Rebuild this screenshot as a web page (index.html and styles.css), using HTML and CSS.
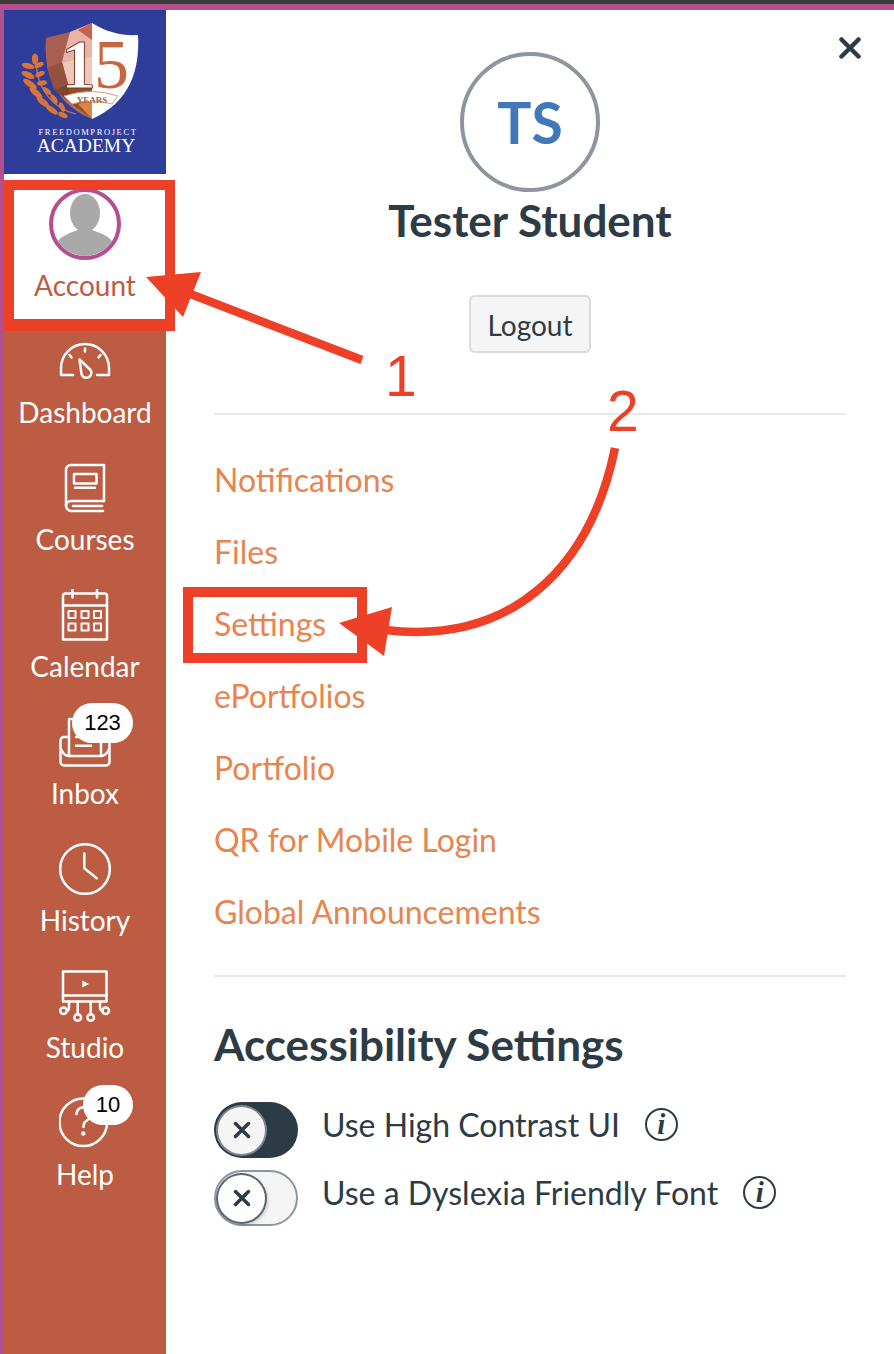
FILE: index.html
```html
<!DOCTYPE html>
<html lang="en">
<head>
<meta charset="utf-8">
<title>Account</title>
<link rel="stylesheet" href="styles.css">
</head>
<body>
<div class="page">
  <div class="topbar"></div>
  <div class="app">
    <nav class="sidebar">
      <svg class="logo" viewBox="4 10 162 164" xmlns="http://www.w3.org/2000/svg">
        <rect x="4" y="10" width="162" height="164" fill="#2e3d9a"/>
        <path d="M92 23 C78 32 62 37 46 38 C44 70 52 102 92 119 Z" fill="#b76a58"/>
        <polygon points="46,38 70,32 62,62 47,68" fill="#a85f52"/>
        <polygon points="70,32 92,23 92,56 62,62" fill="#e8b4a6"/>
        <polygon points="92,23 92,40 78,30" fill="#c9604f"/>
        <polygon points="62,62 92,56 92,88 68,84" fill="#eec6ba"/>
        <polygon points="47,68 62,62 68,84 54,90" fill="#96503f"/>
        <polygon points="54,90 68,84 72,104" fill="#7f4530"/>
        <polygon points="68,84 92,88 92,119 72,104" fill="#8a5026"/>
        <polygon points="78,104 92,100 92,119" fill="#d9873f"/>
        <path d="M92 23 C106 32 122 36 138 35 C140 70 130 102 92 119 Z" fill="#fff"/>
        <g fill="#d8743a">
          <ellipse cx="35" cy="59" rx="3.200" ry="5.500"/>
          <ellipse cx="28" cy="66" rx="6.500" ry="2.800" transform="rotate(15 28 66)"/>
          <ellipse cx="39" cy="65" rx="5" ry="2.500" transform="rotate(-25 39 65)"/>
          <ellipse cx="28" cy="75" rx="7" ry="3" transform="rotate(25 28 75)"/>
          <ellipse cx="40" cy="74" rx="5" ry="2.500" transform="rotate(-25 40 74)"/>
          <ellipse cx="30" cy="84" rx="8" ry="3" transform="rotate(35 30 84)"/>
          <ellipse cx="42" cy="83" rx="5" ry="2.500" transform="rotate(-10 42 83)"/>
          <ellipse cx="36" cy="93" rx="8" ry="3" transform="rotate(40 36 93)"/>
          <ellipse cx="47" cy="91" rx="5.500" ry="2.500" transform="rotate(40 47 91)"/>
          <ellipse cx="43" cy="102" rx="8" ry="3" transform="rotate(40 43 102)"/>
          <ellipse cx="54" cy="99" rx="5.500" ry="2.500" transform="rotate(55 54 99)"/>
          <ellipse cx="52" cy="110" rx="7" ry="2.800" transform="rotate(35 52 110)"/>
          <ellipse cx="62" cy="107" rx="5" ry="2.500" transform="rotate(65 62 107)"/>
          <ellipse cx="63" cy="115" rx="5" ry="2.500" transform="rotate(25 63 115)"/>
        </g>
        <path d="M36 60 C36 85 50 108 76 114" fill="none" stroke="#d8743a" stroke-width="1.200"/>
        <text x="61" y="88" class="logo-one">1</text>
        <text x="94" y="88" class="logo-five">5</text>
        <path d="M64 96 Q92 87 118 96 L112 104 Q92 98 72 104 Z" fill="#fff" stroke="#d99a80" stroke-width="1"/>
        <text x="92" y="103" class="logo-years">YEARS</text>
        <text x="88" y="135" class="logo-small">FREEDOMPROJECT</text>
        <text x="86" y="152" class="logo-big">ACADEMY</text>
      </svg>

      <a class="account">
        <span class="account-avatar">
          <svg viewBox="0 0 64 64" class="account-photo" xmlns="http://www.w3.org/2000/svg">
            <ellipse cx="32" cy="21" rx="15" ry="19" fill="#a9a9a9"/>
            <path d="M3 52 C8 42 20 41 26 37 H38 C44 41 56 42 61 52 C50 70 14 70 3 52 Z" fill="#a9a9a9"/>
          </svg>
        </span>
        <span class="account-label">Account</span>
      </a>

      <ul class="nav-list">
        <li class="nav-item">
          <svg class="nav-icon" viewBox="0 0 52 52" xmlns="http://www.w3.org/2000/svg">
            <path d="M14 40 H2 V33 A24 24 0 0 1 50 33 V40 H38"/>
            <path d="M26 13.500 V16.500 M10.500 20 L12.500 22.500 M41.500 20 L39.500 22.500"/>
            <path d="M20.500 24.500 L31.500 35 A5 5 0 1 1 22.500 39 Z"/>
          </svg>
          <span class="nav-label">Dashboard</span>
        </li>
        <li class="nav-item">
          <svg class="nav-icon" viewBox="0 0 52 52" xmlns="http://www.w3.org/2000/svg">
            <path d="M45 39 V3 H12 A5 5 0 0 0 7 8 V43 A5.500 5.500 0 0 0 13 49 H44"/>
            <path d="M7 44 A5 5 0 0 1 12 39 H45"/>
            <path d="M14 44 H43"/>
            <rect x="15" y="12" width="22.500" height="9.500"/>
            <path d="M16 25.700 H36"/>
          </svg>
          <span class="nav-label">Courses</span>
        </li>
        <li class="nav-item">
          <svg class="nav-icon" viewBox="0 0 52 52" xmlns="http://www.w3.org/2000/svg">
            <path d="M4 50.500 V7 A2.500 2.500 0 0 1 6.500 4.500 H45.500 A2.500 2.500 0 0 1 48 7 V50.500 Z"/>
            <path d="M4 16.500 H48 M13.500 1 V8.500 M38 1 V8.500"/>
            <rect class="cell" x="9.500" y="22" width="7" height="7"/>
            <rect class="cell" x="22.500" y="22" width="7" height="7"/>
            <rect class="cell" x="35" y="22" width="7" height="7"/>
            <rect class="cell" x="9.500" y="34.500" width="7" height="7"/>
            <rect class="cell" x="22.500" y="34.500" width="7" height="7"/>
            <rect class="cell" x="35" y="34.500" width="7" height="7"/>
          </svg>
          <span class="nav-label">Calendar</span>
        </li>
        <li class="nav-item">
          <svg class="nav-icon" viewBox="0 0 52 52" xmlns="http://www.w3.org/2000/svg">
            <path d="M9 21 H5 A3.500 3.500 0 0 0 1.500 24.500 V46 A3.500 3.500 0 0 0 5 49.500 H47 A3.500 3.500 0 0 0 50.500 46 V24.500 A3.500 3.500 0 0 0 47 21 H43"/>
            <path d="M2 33 C4 38 6 40 10 40 H42 C46 40 48 38 50 33"/>
            <path d="M10 40 V3 H42 V40"/>
            <path d="M17 29.700 H32 M17 21 H36"/>
          </svg>
          <span class="nav-label">Inbox</span>
          <span class="badge badge-inbox">123</span>
        </li>
        <li class="nav-item">
          <svg class="nav-icon" viewBox="0 0 52 52" xmlns="http://www.w3.org/2000/svg">
            <circle cx="26" cy="26" r="24.800"/>
            <path d="M25.300 10.500 V25.300 L37.700 35.300"/>
          </svg>
          <span class="nav-label">History</span>
        </li>
        <li class="nav-item">
          <svg class="nav-icon" viewBox="0 0 52 52" xmlns="http://www.w3.org/2000/svg">
            <rect x="4" y="1.500" width="43.500" height="30"/>
            <path d="M4 25.500 H47.500"/>
            <path class="solid" d="M23.300 10.500 V17.500 L30 14 Z"/>
            <circle cx="4.500" cy="40.700" r="3.300"/>
            <circle cx="18.700" cy="47.500" r="3.300"/>
            <circle cx="31.700" cy="47.500" r="3.300"/>
            <circle cx="46.700" cy="40.700" r="3.300"/>
            <path d="M18.700 32 V44 M31.700 32 V44"/>
            <path d="M10 32 V37 C10 40 9 40.700 8 40.700 M41 32 V37 C41 40 42 40.700 43.400 40.700"/>
          </svg>
          <span class="nav-label">Studio</span>
        </li>
        <li class="nav-item">
          <svg class="nav-icon" viewBox="0 0 52 52" xmlns="http://www.w3.org/2000/svg">
            <circle cx="24.300" cy="25.300" r="23.800"/>
            <path d="M17.500 17 A7 7 0 1 1 28.500 23 C25.500 25 24.500 26 24.500 30"/>
            <circle class="solid" cx="24.300" cy="36.500" r="2.200"/>
          </svg>
          <span class="nav-label">Help</span>
          <span class="badge badge-help">10</span>
        </li>
      </ul>
    </nav>

    <main class="panel">
      <button class="close" aria-label="Close">
        <svg viewBox="0 0 22 22" xmlns="http://www.w3.org/2000/svg"><path d="M2.500 2.500 L19.500 19.500 M19.500 2.500 L2.500 19.500"/></svg>
      </button>
      <header class="profile">
        <div class="initials">TS</div>
        <h1 class="name">Tester Student</h1>
        <button class="logout">Logout</button>
      </header>
      <ul class="links">
        <li><a>Notifications</a></li>
        <li><a>Files</a></li>
        <li><a>Settings</a></li>
        <li><a>ePortfolios</a></li>
        <li><a>Portfolio</a></li>
        <li><a>QR for Mobile Login</a></li>
        <li><a>Global Announcements</a></li>
      </ul>
      <section class="a11y">
        <h2 class="a11y-title">Accessibility Settings</h2>
        <div class="setting">
          <span class="toggle toggle-dark"><span class="knob"><svg viewBox="0 0 18 18" xmlns="http://www.w3.org/2000/svg"><path d="M2.500 2.500 L15.500 15.500 M15.500 2.500 L2.500 15.500"/></svg></span></span>
          <span class="setting-label">Use High Contrast UI</span>
          <span class="info">i</span>
        </div>
        <div class="setting">
          <span class="toggle toggle-light"><span class="knob"><svg viewBox="0 0 18 18" xmlns="http://www.w3.org/2000/svg"><path d="M2.500 2.500 L15.500 15.500 M15.500 2.500 L2.500 15.500"/></svg></span></span>
          <span class="setting-label">Use a Dyslexia Friendly Font</span>
          <span class="info">i</span>
        </div>
      </section>
    </main>
  </div>

  <svg class="annotations" viewBox="0 0 894 1354" xmlns="http://www.w3.org/2000/svg">
    <path class="mark" fill-rule="evenodd" d="M4 180 H175 V331 H4 Z M14 190 V319 H165 V190 Z"/>
    <path class="mark" fill-rule="evenodd" d="M183 587 H367 V663 H183 Z M193 597 V653 H357 V597 Z"/>
    <path class="mark-line" d="M362 360 L180 290"/>
    <polygon class="mark" points="146,277 201,272 183,317"/>
    <path class="mark-line" d="M615 448 C590 570 510 645 385 630"/>
    <polygon class="mark" points="339,623 392,607 384,656"/>
    <text class="mark-num" x="385" y="396">1</text>
    <text class="mark-num" x="607" y="431">2</text>
  </svg>
</div>
</body>
</html>
```

FILE: styles.css
```css
* { box-sizing: border-box; }

html, body {
  margin: 0;
  padding: 0;
  background: #fff;
}

body {
  font-family: "Lato", "Liberation Sans", sans-serif;
  color: #2d3b45;
}

.page {
  position: relative;
  width: 894px;
  height: 1354px;
  overflow: hidden;
  display: flex;
  flex-direction: column;
}

.topbar {
  height: 10px;
  flex: none;
  background: #b34f8f;
  border-top: 4px solid #3c3c3c;
}

.app {
  flex: 1;
  display: flex;
  border-left: 4px solid #b34f8f;
}

/* Sidebar */
.sidebar {
  width: 162px;
  flex: none;
  background: #bb5c43;
  display: flex;
  flex-direction: column;
}

.logo {
  display: block;
  width: 162px;
  height: 164px;
}

.logo-one {
  font-family: "Liberation Serif", serif;
  font-size: 70px;
  font-weight: 700;
  fill: #fff;
  stroke: #7b3a22;
  stroke-width: 1;
}

.logo-five {
  font-family: "Liberation Serif", serif;
  font-size: 70px;
  fill: #c8643e;
}

.logo-years {
  font-family: "Liberation Serif", serif;
  font-size: 9px;
  font-weight: 700;
  fill: #a9603f;
  text-anchor: middle;
}

.logo-small {
  font-family: "Liberation Serif", serif;
  font-size: 8.500px;
  letter-spacing: 1.600px;
  fill: #fff;
  text-anchor: middle;
}

.logo-big {
  font-family: "Liberation Serif", serif;
  font-size: 19.500px;
  fill: #fff;
  text-anchor: middle;
}

.account {
  height: 146px;
  flex: none;
  background: #fff;
  display: flex;
  flex-direction: column;
  align-items: center;
  padding-top: 14px;
}

.account-avatar {
  width: 72px;
  height: 72px;
  border: 4px solid #b34f8f;
  border-radius: 50%;
  overflow: hidden;
  display: block;
  flex: none;
}

.account-photo {
  display: block;
  width: 64px;
  height: 64px;
}

.account-label {
  margin-top: 9px;
  font-size: 28px;
  line-height: 32px;
  color: #bb5c43;
}

.nav-list {
  list-style: none;
  margin: 15px 0 0;
  padding: 0;
  display: flex;
  flex-direction: column;
  gap: 34px;
}

.nav-item {
  position: relative;
  display: flex;
  flex-direction: column;
  align-items: center;
  gap: 9px;
}

.nav-icon {
  display: block;
  width: 52px;
  height: 52px;
  fill: none;
  stroke: #fff;
  stroke-width: 2.500;
  stroke-linejoin: round;
  stroke-linecap: round;
}

.nav-icon .cell {
  stroke-width: 2;
}

.nav-icon .solid {
  fill: #fff;
  stroke: none;
}

.nav-label {
  font-size: 28px;
  line-height: 32px;
  color: #fff;
}

.badge {
  position: absolute;
  top: -13px;
  right: 33px;
  height: 40px;
  border-radius: 20px;
  background: #fff;
  color: #000;
  font-family: "Liberation Sans", sans-serif;
  font-size: 22px;
  line-height: 40px;
  text-align: center;
}

.badge-inbox { width: 61px; }

.badge-help { width: 50px; top: -12px; }

/* Panel */
.panel {
  position: relative;
  flex: 1;
  padding: 42px 48px 0;
}

.close {
  position: absolute;
  top: 27px;
  right: 33px;
  width: 22px;
  height: 22px;
  padding: 0;
  border: 0;
  background: none;
}

.close svg {
  display: block;
  fill: none;
  stroke: #2d3b45;
  stroke-width: 4.500;
  stroke-linecap: round;
}

.profile {
  display: flex;
  flex-direction: column;
  align-items: center;
  padding-bottom: 60px;
  border-bottom: 2px solid #e7e8e9;
}

.initials {
  width: 140px;
  height: 140px;
  border: 4px solid #8d959f;
  border-radius: 50%;
  display: flex;
  align-items: center;
  justify-content: center;
  color: #4078b9;
  font-size: 57px;
  font-weight: 700;
  line-height: 1;
}

.name {
  margin: 3px 0 0;
  font-size: 44px;
  line-height: 50px;
  font-weight: 700;
  color: #2d3b45;
}

.logout {
  margin-top: 50px;
  width: 122px;
  height: 58px;
  border: 2px solid #d7dade;
  border-radius: 6px;
  background: #f5f5f5;
  color: #2d3b45;
  font-family: inherit;
  font-size: 28px;
  padding: 2px 0 0;
}

.links {
  list-style: none;
  margin: 0;
  padding: 28px 0;
  border-bottom: 2px solid #e7e8e9;
}

.links li {
  height: 72px;
  display: flex;
  align-items: center;
}

.links a {
  font-size: 32px;
  line-height: 41px;
  color: #e8854f;
}

.a11y-title {
  margin: 40px 0 31px;
  font-size: 44px;
  line-height: 54px;
  font-weight: 700;
  color: #2d3b45;
}

.a11y {
  display: flex;
  flex-direction: column;
}

.setting {
  display: flex;
  align-items: center;
  height: 56px;
  margin-bottom: 12px;
}

.setting-label {
  margin-left: 24px;
  font-size: 32px;
  line-height: 40px;
  position: relative;
  top: -5px;
}

.toggle {
  width: 84px;
  height: 56px;
  flex: none;
  border-radius: 28px;
  display: flex;
  align-items: center;
  padding-left: 4px;
}

.toggle-dark {
  background: #2d3b45;
}

.toggle-light {
  background: #f5f5f5;
  border: 2px solid #8b969e;
  padding-left: 2px;
}

.knob {
  width: 47px;
  height: 47px;
  border-radius: 50%;
  display: flex;
  align-items: center;
  justify-content: center;
  box-shadow: 0 0 0 2px #7c8790;
}

.toggle-dark .knob { background: #f5f5f5; }

.toggle-light .knob {
  background: #fff;
  box-shadow: 0 0 0 2px #5b6770, 2px 2px 4px rgba(0, 0, 0, 0.25);
}

.knob svg {
  width: 18px;
  height: 18px;
  fill: none;
  stroke: #2d3b45;
  stroke-width: 3.500;
  stroke-linecap: round;
}

.info {
  margin-left: 25px;
  width: 33px;
  height: 33px;
  border: 2px solid #2d3b45;
  border-radius: 50%;
  display: flex;
  align-items: center;
  justify-content: center;
  font-family: "Liberation Serif", serif;
  font-size: 29px;
  font-style: italic;
  font-weight: 700;
  line-height: 1;
  position: relative;
  top: -6px;
}

/* Annotations lying over the screenshot */
.annotations {
  position: absolute;
  inset: 0;
  width: 894px;
  height: 1354px;
  pointer-events: none;
}

.mark { fill: #ee4026; }

.mark-line {
  fill: none;
  stroke: #ee4026;
  stroke-width: 8.500;
}

.mark-num {
  font-family: "Liberation Sans", sans-serif;
  font-size: 57px;
  fill: #ee4026;
}
```
